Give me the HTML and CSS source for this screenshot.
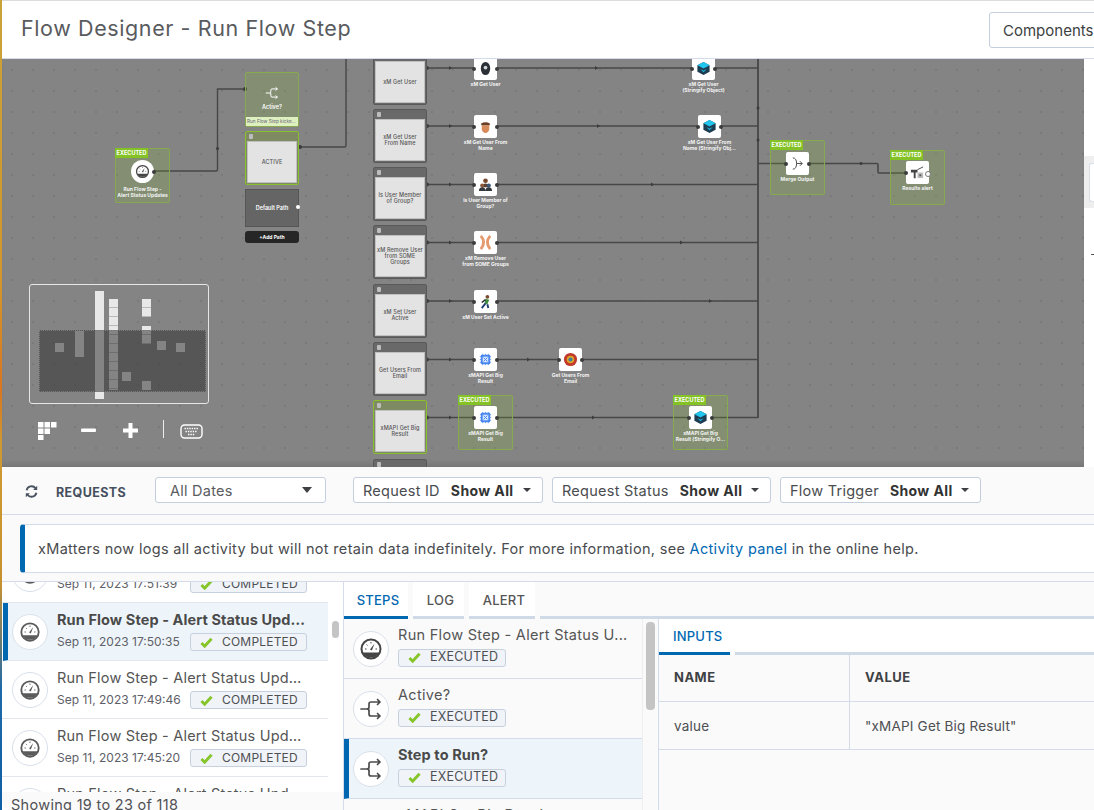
FILE: index.html
```html
<!DOCTYPE html>
<html lang="en">
<head>
  <meta charset="UTF-8" />
  <title>Flow Designer - Run Flow Step</title>
  <link rel="stylesheet" href="styles.css">
</head>
<body>
  <svg class="icon-defs" width="0" height="0">
    <symbol id="gauge" viewBox="0 0 24 24">
      <circle cx="12" cy="12" r="9.5" fill="none" stroke="currentColor" stroke-width="2"/>
      <path d="M3.600 15.500h16.800A9.500 9.500 0 0 1 3.600 15.500z" fill="currentColor"/>
      <path d="M11 12.500l4.500-6 -2.600 7z" fill="currentColor"/>
      <path d="M6 12h1.500M12 5v1.500M7.500 7.500l1 1M18 12h-1.500" stroke="currentColor" stroke-width="1"/>
    </symbol>
    <symbol id="split" viewBox="0 0 24 24">
      <path d="M2 12h6q2 0 2-2V7q0-2 2-2h9M18.500 2.500L21 5l-2.500 2.500M10 14v3q0 2 2 2h9M18.500 16.500L21 19l-2.500 2.500" fill="none" stroke="currentColor" stroke-width="1.700" stroke-linecap="round" stroke-linejoin="round"/>
      <path d="M8 12q2 0 2 2" fill="none" stroke="currentColor" stroke-width="1.700"/>
    </symbol>
    <symbol id="check" viewBox="0 0 14 12">
      <path d="M1.500 6.500L5 10l7.500-8" fill="none" stroke="#86c52a" stroke-width="3.200"/>
    </symbol>
    <symbol id="hex" viewBox="0 0 16 16">
      <path d="M8 1l6.500 3.500v7L8 15 1.500 11.500v-7z" fill="#1d3c52"/>
      <path d="M8 1l6.500 3.500L8 8 1.500 4.500z" fill="#21c6ee"/>
      <path d="M4.500 8.500L8 10.500l3.500-2L8 12z" fill="#21c6ee"/>
    </symbol>
    <symbol id="chip" viewBox="0 0 16 16">
      <rect x="3" y="3" width="10" height="10" rx="1" fill="#4a86ee"/>
      <path d="M2 5h12M2 8h12M2 11h12M5 2v12M8 2v12M11 2v12" stroke="#4a86ee" stroke-width=".8"/>
      <rect x="5" y="5" width="6" height="6" fill="#d5e6ff"/>
      <path d="M6 6l4 4M10 6l-4 4" stroke="#4a86ee" stroke-width="1"/>
    </symbol>
  </svg>

  <div class="app">
    <header class="top-bar">
      <h1>Flow Designer - Run Flow Step</h1>
      <button class="components-btn">Components</button>
    </header>

    <section class="designer">
      <div class="canvas">
        <div class="stage">
          <svg class="wires" width="1094" height="470" viewBox="0 0 1094 470">
            <g fill="none" stroke="#474747" stroke-width="1.400">
              <path d="M153 171H216Q217.500 171 217.500 169.500V89H245"/>
              <path d="M346 59V145.500Q346 147 344.500 147H300"/>
              <path d="M427 68H758M427 126H758M427 184.500H758M427 242.500H758M427 301H758M427 359.500H758M427 417.500H758"/>
              <path d="M758 59V418" stroke-width="1.800"/>
              <path d="M758 163.500H786M809 163.500H877Q878 163.500 878 165V172Q878 173 879 173H906" stroke-width="1.600"/>
            </g>
            <g fill="#3c3c3c">
              <circle cx="153" cy="171" r="2"/><circle cx="245" cy="89" r="2"/><circle cx="300" cy="147" r="2"/><circle cx="217.500" cy="148.500" r="1.500"/>
              <circle cx="427" cy="68" r="2"/><circle cx="427" cy="126" r="2"/><circle cx="427" cy="184.500" r="2"/><circle cx="427" cy="242.500" r="2"/><circle cx="427" cy="301" r="2"/><circle cx="427" cy="359.500" r="2"/><circle cx="427" cy="417.500" r="2"/>
              <path d="M449 66l3 2-3 2zM595 66l3 2-3 2zM449 124l3 2-3 2zM597 124l3 2-3 2zM449 182.500l3 2-3 2zM651 182.500l3 2-3 2zM449 240.500l3 2-3 2zM680 240.500l3 2-3 2zM449 299l3 2-3 2zM709 299l3 2-3 2zM449 357.500l3 2-3 2zM527 357.500l3 2-3 2zM449 415.500l3 2-3 2zM592 415.500l3 2-3 2z"/>
              <circle cx="758" cy="108" r="1.500"/><circle cx="758" cy="140" r="1.500"/><circle cx="861" cy="163.500" r="1.500"/>
            </g>
          </svg>

          <div class="group group-trigger"><span class="tag">EXECUTED</span></div>
          <div class="group group-big"><span class="tag">EXECUTED</span></div>
          <div class="group group-big-str"><span class="tag">EXECUTED</span></div>
          <div class="group group-merge"><span class="tag">EXECUTED</span></div>
          <div class="group group-results"><span class="tag">EXECUTED</span></div>

          <div class="node at-trigger">
            <div class="step round"><svg class="ico dark"><use href="#gauge"/></svg></div>
            <div class="step-label">Run Flow Step -<br>Alert Status Updates</div>
          </div>

          <div class="switch-col">
            <div class="switch-head">
              <svg class="switch-ico"><use href="#split"/></svg>
              <div class="switch-name">Active?</div>
              <div class="switch-note">Run Flow Step kicke...</div>
            </div>
            <div class="lane picked"><div class="lane-top"></div><div class="lane-body">ACTIVE</div></div>
            <div class="default-path">Default Path</div>
            <div class="add-path">+Add Path</div>
          </div>

          <div class="lane-col">
            <div class="lane"><div class="lane-top"></div><div class="lane-body">xM Get User</div></div>
            <div class="lane"><div class="lane-top"></div><div class="lane-body">xM Get User<br>From Name</div></div>
            <div class="lane"><div class="lane-top"></div><div class="lane-body">Is User Member<br>of Group?</div></div>
            <div class="lane"><div class="lane-top"></div><div class="lane-body">xM Remove User<br>from SOME<br>Groups</div></div>
            <div class="lane"><div class="lane-top"></div><div class="lane-body">xM Set User<br>Active</div></div>
            <div class="lane"><div class="lane-top"></div><div class="lane-body">Get Users From<br>Email</div></div>
            <div class="lane picked"><div class="lane-top"></div><div class="lane-body">xMAPI Get Big<br>Result</div></div>
            <div class="lane"><div class="lane-top"></div><div class="lane-body"></div></div>
          </div>

          <div class="node at-user">
            <div class="step"><svg class="ico" viewBox="0 0 16 16"><ellipse cx="8" cy="8" rx="5" ry="7" fill="#2b2f36"/><circle cx="8" cy="7" r="2" fill="#cfd3d8"/></svg></div>
            <div class="step-label">xM Get User</div>
          </div>
          <div class="node at-user-str">
            <div class="step"><svg class="ico"><use href="#hex"/></svg></div>
            <div class="step-label">xM Get User<br>(Stringify Object)</div>
          </div>
          <div class="node at-name">
            <div class="step"><svg class="ico" viewBox="0 0 16 16"><path d="M3 5q5-3 10 0l-1 2H4z" fill="#6b3d25"/><path d="M4 7h8v4q-1 4-4 4t-4-4z" fill="#d88a5a"/></svg></div>
            <div class="step-label">xM Get User From<br>Name</div>
          </div>
          <div class="node at-name-str">
            <div class="step"><svg class="ico"><use href="#hex"/></svg></div>
            <div class="step-label">xM Get User From<br>Name (Stringify Obj...</div>
          </div>
          <div class="node at-member">
            <div class="step"><svg class="ico" viewBox="0 0 16 16"><circle cx="8" cy="4" r="2.500" fill="#7a4a2c"/><path d="M4 9q4-4 8 0v2H4z" fill="#5c4030"/><circle cx="4.500" cy="9" r="2.200" fill="#8a5a3a"/><circle cx="11.500" cy="9" r="2.200" fill="#3b5a78"/><path d="M1 15q0-4 3.500-4T8 15zM8 15q0-4 3.500-4t3.500 4z" fill="#33383f"/></svg></div>
            <div class="step-label">Is User Member of<br>Group?</div>
          </div>
          <div class="node at-remove">
            <div class="step"><svg class="ico" viewBox="0 0 16 16"><path d="M3 1q6 7 0 14M13 1q-6 7 0 14" fill="none" stroke="#e59a6d" stroke-width="3"/></svg></div>
            <div class="step-label">xM Remove User<br>from SOME Groups</div>
          </div>
          <div class="node at-active">
            <div class="step"><svg class="ico" viewBox="0 0 16 16"><circle cx="10" cy="3" r="2" fill="#7a4a2c"/><path d="M8 5l4 1-2 5-3-1z" fill="#3f8f3f"/><path d="M8 10l-4 5M10 11l1 4" stroke="#1d3c72" stroke-width="2"/><path d="M8 6L4 9" stroke="#24292f" stroke-width="1.500"/></svg></div>
            <div class="step-label">xM User Set Active</div>
          </div>
          <div class="node at-big-a">
            <div class="step"><svg class="ico"><use href="#chip"/></svg></div>
            <div class="step-label">xMAPI Get Big<br>Result</div>
          </div>
          <div class="node at-email">
            <div class="step"><svg class="ico" viewBox="0 0 16 16"><circle cx="8" cy="8" r="7" fill="#c0392b"/><circle cx="8" cy="8" r="4" fill="#e0a526"/><circle cx="8" cy="8" r="2.200" fill="#3f7f9f"/></svg></div>
            <div class="step-label">Get Users From<br>Email</div>
          </div>
          <div class="node at-big-b">
            <div class="step"><svg class="ico"><use href="#chip"/></svg></div>
            <div class="step-label">xMAPI Get Big<br>Result</div>
          </div>
          <div class="node at-big-str">
            <div class="step"><svg class="ico"><use href="#hex"/></svg></div>
            <div class="step-label">xMAPI Get Big<br>Result (Stringify O...</div>
          </div>
          <div class="node at-merge">
            <div class="step"><svg class="ico" viewBox="0 0 16 16"><path d="M3 2q4 0 4 6T3 14M7 8h6M10.500 5.500L13 8l-2.500 2.500" fill="none" stroke="#444" stroke-width="1"/></svg></div>
            <div class="step-label">Merge Output</div>
          </div>
          <div class="node at-results">
            <div class="step open-end"><svg class="ico" viewBox="0 0 16 16"><path d="M1 5h7v3H6v6H4V8H1z" fill="#444"/><path d="M8 5l6-3" stroke="#444" stroke-width="1"/><rect x="8" y="8" width="6" height="6" fill="#bbb"/><rect x="10" y="10" width="2" height="2" fill="#555"/></svg></div>
            <div class="step-label">Results alert</div>
          </div>

          <div class="minimap">
            <div class="mini-view"></div>
            <i class="m m1"></i><i class="m m2"></i><i class="m m3"></i><i class="m m4"></i><i class="m m5"></i>
            <i class="m m6"></i><i class="m m7"></i><i class="m m8"></i><i class="m m9"></i><i class="m m10"></i>
          </div>

          <div class="canvas-tools">
            <svg class="tool-fit" width="19" height="18" viewBox="0 0 19 18" fill="#fff"><path d="M0 0h5.500v5.500H0zM6.500 0H12v5.500H6.500zM13 0h5.500v5.500H13zM0 6.500h5.500V12H0zM6.500 6.500H12V12H6.500zM0 13h5.500v5H0z"/></svg>
            <svg class="tool-minus" width="15" height="5" viewBox="0 0 15 5"><rect y="0.500" width="15" height="3.500" rx="1" fill="#fff"/></svg>
            <svg class="tool-plus" width="15" height="15" viewBox="0 0 15 15"><path d="M5.500 0h4v5.500H15v4H9.500V15h-4V9.500H0v-4h5.500z" fill="#fff"/></svg>
            <span class="tool-sep"></span>
            <svg class="tool-keys" width="23" height="15" viewBox="0 0 23 15"><rect x="1" y="1" width="21" height="13" rx="3.500" fill="none" stroke="#fff" stroke-width="1.400"/><path d="M4.500 4.500h14M5.500 7.500h12M8 10.500h7" stroke="#fff" stroke-width="1.300" stroke-dasharray="1.400 1"/></svg>
          </div>
        </div>
      </div>
      <aside class="side-peek">
        <div class="peek-band"><div class="peek-card"></div></div>
        <div class="peek-dash"></div>
      </aside>
    </section>

    <div class="toolbar">
      <svg class="refresh" width="13" height="13" viewBox="0 0 16 16"><path d="M2 6.500A6.200 6.200 0 0 1 13 4M14 9.500A6.200 6.200 0 0 1 3 12" fill="none" stroke="#4a5361" stroke-width="2.400"/><path d="M15 1v5h-5zM1 15v-5h5z" fill="#4a5361"/></svg>
      <span class="req-title">REQUESTS</span>
      <div class="select dates">All Dates<i class="caret big"></i></div>
      <div class="select filter f-id">Request ID <b>Show All</b><i class="caret"></i></div>
      <div class="select filter f-status">Request Status <b>Show All</b><i class="caret"></i></div>
      <div class="select filter f-trigger">Flow Trigger <b>Show All</b><i class="caret"></i></div>
    </div>

    <div class="notice-wrap">
      <div class="notice"><span>xMatters now logs all activity but will not retain data indefinitely. For more information, see <a href="#">Activity panel</a> in the online help.</span></div>
    </div>

    <div class="panels">
      <div class="req-panel">
        <div class="req-scroll">
          <ul class="req-list">
            <li class="req-row">
              <span class="circle"><svg class="gauge-ico"><use href="#gauge"/></svg></span>
              <div class="req-text">
                <div class="req-name">Run Flow Step - Alert Status Updates</div>
                <div class="req-meta"><span class="req-date">Sep 11, 2023 17:51:39</span><span class="badge wide"><svg class="tick"><use href="#check"/></svg>COMPLETED</span></div>
              </div>
            </li>
            <li class="req-row selected">
              <span class="circle"><svg class="gauge-ico"><use href="#gauge"/></svg></span>
              <div class="req-text">
                <div class="req-name">Run Flow Step - Alert Status Updates</div>
                <div class="req-meta"><span class="req-date">Sep 11, 2023 17:50:35</span><span class="badge wide"><svg class="tick"><use href="#check"/></svg>COMPLETED</span></div>
              </div>
            </li>
            <li class="req-row">
              <span class="circle"><svg class="gauge-ico"><use href="#gauge"/></svg></span>
              <div class="req-text">
                <div class="req-name">Run Flow Step - Alert Status Updates</div>
                <div class="req-meta"><span class="req-date">Sep 11, 2023 17:49:46</span><span class="badge wide"><svg class="tick"><use href="#check"/></svg>COMPLETED</span></div>
              </div>
            </li>
            <li class="req-row">
              <span class="circle"><svg class="gauge-ico"><use href="#gauge"/></svg></span>
              <div class="req-text">
                <div class="req-name">Run Flow Step - Alert Status Updates</div>
                <div class="req-meta"><span class="req-date">Sep 11, 2023 17:45:20</span><span class="badge wide"><svg class="tick"><use href="#check"/></svg>COMPLETED</span></div>
              </div>
            </li>
            <li class="req-row">
              <span class="circle"><svg class="gauge-ico"><use href="#gauge"/></svg></span>
              <div class="req-text">
                <div class="req-name">Run Flow Step - Alert Status Updates</div>
              </div>
            </li>
          </ul>
          <div class="scroll-track"><span class="thumb req-thumb"></span></div>
        </div>
        <div class="req-foot">Showing 19 to 23 of 118</div>
      </div>

      <div class="detail">
        <nav class="tabs">
          <a class="tab active t-steps">STEPS</a>
          <a class="tab t-log">LOG</a>
          <a class="tab t-alert">ALERT</a>
          <span class="tab-rest"></span>
        </nav>
        <div class="detail-body">
          <div class="steps-col">
            <ul class="step-list">
              <li class="step-row">
                <span class="circle"><svg class="gauge-ico strong"><use href="#gauge"/></svg></span>
                <div class="step-text"><div class="step-name">Run Flow Step - Alert Status U...</div><span class="badge"><svg class="tick"><use href="#check"/></svg>EXECUTED</span></div>
              </li>
              <li class="step-row">
                <span class="circle"><svg class="split-ico"><use href="#split"/></svg></span>
                <div class="step-text"><div class="step-name">Active?</div><span class="badge"><svg class="tick"><use href="#check"/></svg>EXECUTED</span></div>
              </li>
              <li class="step-row selected">
                <span class="circle"><svg class="split-ico"><use href="#split"/></svg></span>
                <div class="step-text"><div class="step-name">Step to Run?</div><span class="badge"><svg class="tick"><use href="#check"/></svg>EXECUTED</span></div>
              </li>
              <li class="step-row">
                <span class="circle"></span>
                <div class="step-text"><div class="step-name">xMAPI Get Big Result</div></div>
              </li>
            </ul>
            <div class="scroll-track steps-track"><span class="thumb step-thumb"></span></div>
          </div>
          <div class="inputs">
            <div class="inputs-tabs"><a class="inputs-tab">INPUTS</a><span class="inputs-rest"></span></div>
            <div class="kv head"><div class="k">NAME</div><div class="v">VALUE</div></div>
            <div class="kv"><div class="k">value</div><div class="v">"xMAPI Get Big Result"</div></div>
          </div>
        </div>
      </div>
    </div>
  </div>
</body>
</html>
```

FILE: styles.css
```css
:root {
  --blue: #0067b1;
  --line: #d3dce8;
  --text: #3f4144;
  --soft: #fafafa;
  --picked: #eef5fa;
  --lime: #84c225;
}

* {
  box-sizing: border-box;
}

html, body {
  margin: 0;
  height: 810px;
  overflow: hidden;
}

body {
  font-family: Inter, 'Noto Sans', sans-serif;
  color: var(--text);
  background: linear-gradient(#c9a33a 0, #d3962c 35%, #d9761f 48%, #cf9a32 55%, #c8912f 72%, #1f69a8 85%, #0f5fa5 100%);
}

ul {
  list-style: none;
  margin: 0;
  padding: 0;
}

.icon-defs {
  position: absolute;
}

.app {
  margin-left: 2px;
  height: 810px;
  overflow: hidden;
  display: flex;
  flex-direction: column;
  background: var(--soft);
}

/* header */
.top-bar {
  height: 59px;
  flex: none;
  display: flex;
  align-items: center;
  justify-content: space-between;
  padding: 0 0 0 19px;
  background: #fff;
  border-top: 1px solid #dcdcdc;
  border-bottom: 1px solid var(--line);
  overflow: hidden;
}

.top-bar h1 {
  margin: 0 0 3px;
  font-size: 21.5px;
  font-weight: 400;
  color: #595b5e;
  letter-spacing: 0.6px;
}

.components-btn {
  width: 125px;
  height: 36px;
  margin-right: -20px;
  padding: 1px 0 0 13px;
  text-align: left;
  font: 15px Inter, sans-serif;
  color: #3d3f42;
  background: #fff;
  border: 1px solid #c3cede;
  border-radius: 3px;
}

/* designer canvas */
.designer {
  height: 408px;
  flex: none;
  display: flex;
}

.canvas {
  position: relative;
  width: 1082px;
  overflow: hidden;
  background: #848484;
  box-shadow: inset 0 -6px 6px -4px rgba(0, 0, 0, 0.15);
}

.stage {
  position: absolute;
  left: -2px;
  top: -59px;
  width: 1084px;
  height: 526px;
  background-image: radial-gradient(circle, #5a5a5a 0.5px, transparent 0.9px);
  background-size: 21px 21px;
  background-position: 1.500px -3.500px;
}

.wires {
  position: absolute;
  left: 0;
  top: 0;
}

.group {
  position: absolute;
  width: 55px;
  height: 55px;
  background: rgba(132, 194, 37, 0.17);
  border: 1px solid #88aa4e;
  border-radius: 2px;
}

.tag {
  display: block;
  width: 33px;
  height: 10px;
  margin: -1px 0 0 -1px;
  font-size: 5.500px;
  font-weight: 700;
  line-height: 10px;
  text-align: center;
  color: #fff;
  background: var(--lime);
}

.group-trigger { left: 115px; top: 148px; }
.group-big { left: 458px; top: 395px; }
.group-big-str { left: 673px; top: 395px; }
.group-merge { left: 770px; top: 140px; }
.group-results { left: 890px; top: 150px; }

.node {
  position: absolute;
  width: 55px;
  display: flex;
  flex-direction: column;
  align-items: center;
}

.step {
  position: relative;
  width: 23px;
  height: 23px;
  flex: none;
  display: flex;
  align-items: center;
  justify-content: center;
  background: #fff;
  border-radius: 2px;
}

.step::before,
.step::after {
  content: "";
  position: absolute;
  top: 9.500px;
  width: 4px;
  height: 4px;
  border-radius: 50%;
  background: #3c3c3c;
}

.step::before { left: -2px; }
.step::after { right: -2px; }
.step.round { border-radius: 50%; }
.step.round::before { display: none; }
.step.open-end::after { background: #fff; border: 1px solid #777; }

.ico {
  width: 15px;
  height: 15px;
}

.ico.dark {
  color: #444;
}

.step-label {
  margin-top: 1px;
  font-size: 5px;
  font-weight: 700;
  line-height: 6px;
  text-align: center;
  white-space: nowrap;
  color: #f4f4f4;
}

.at-trigger { left: 115px; top: 160px; }
.at-trigger .step-label { margin-top: 3px; }
.at-user { left: 458px; top: 57px; }
.at-user-str { left: 676px; top: 57px; }
.at-name { left: 458px; top: 115px; }
.at-name-str { left: 682px; top: 115px; }
.at-member { left: 458px; top: 173px; }
.at-remove { left: 458px; top: 231px; }
.at-active { left: 458px; top: 290px; }
.at-big-a { left: 458px; top: 348px; }
.at-email { left: 543px; top: 348px; }
.at-big-b { left: 458px; top: 406px; }
.at-big-str { left: 673px; top: 406px; }
.at-merge { left: 770px; top: 152px; }
.at-results { left: 890px; top: 161px; }

.switch-col {
  position: absolute;
  left: 245px;
  top: 72px;
  width: 54px;
  display: flex;
  flex-direction: column;
  gap: 4px;
}

.switch-head {
  height: 55px;
  display: flex;
  flex-direction: column;
  align-items: center;
  padding-top: 13px;
  color: #fff;
  background: rgba(132, 194, 37, 0.17);
  border: 1px solid #88aa4e;
  border-radius: 2px;
}

.switch-ico {
  width: 14px;
  height: 14px;
}

.switch-name {
  margin-top: 4px;
  font-size: 5.500px;
  font-weight: 600;
}

.switch-note {
  width: 100%;
  height: 9px;
  margin-top: auto;
  padding-left: 1px;
  font-size: 4.700px;
  line-height: 9px;
  white-space: nowrap;
  overflow: hidden;
  color: #667;
  background: #dff0c0;
}

.default-path {
  height: 38px;
  display: flex;
  align-items: center;
  justify-content: center;
  position: relative;
  font-size: 5.500px;
  font-weight: 600;
  color: #fff;
  background: #656565;
  border: 1px solid #555;
}

.default-path::after {
  content: "";
  position: absolute;
  right: -2px;
  top: 15px;
  width: 4px;
  height: 4px;
  border-radius: 50%;
  background: #fff;
}

.add-path {
  height: 12px;
  font-size: 5px;
  font-weight: 700;
  line-height: 12px;
  text-align: center;
  color: #fff;
  background: #262626;
  border-radius: 3px;
}

.lane-col {
  position: absolute;
  left: 373px;
  top: 50.500px;
  width: 54px;
  display: flex;
  flex-direction: column;
  gap: 4.300px;
}

.lane {
  height: 54px;
  flex: none;
  display: flex;
  flex-direction: column;
  background: #696969;
  border: 1px solid #595959;
  border-radius: 2px;
}

.lane.picked {
  background: #7d8a62;
  border-color: #8abf2e;
}

.lane-top {
  height: 9px;
  flex: none;
  position: relative;
}

.lane-top::before {
  content: "";
  position: absolute;
  left: 3px;
  top: 2px;
  width: 4px;
  height: 5px;
  background: #bdbdbd;
  border-radius: 1px;
}

.lane-body {
  flex: 1;
  margin: 0 1px 1px;
  display: flex;
  align-items: center;
  justify-content: center;
  font-size: 5.500px;
  font-weight: 500;
  letter-spacing: 0.1px;
  line-height: 6px;
  text-align: center;
  color: #555;
  background: #e3e3e3;
  border: 1px solid #c0c0c0;
}

/* minimap */
.minimap {
  position: absolute;
  left: 29px;
  top: 284px;
  width: 180px;
  height: 120px;
  border: 1px solid #e6e6e6;
  border-radius: 3px;
}

.mini-view {
  position: absolute;
  left: 9px;
  top: 45px;
  width: 167px;
  height: 62px;
  background: rgba(50, 50, 50, 0.55);
  border: 1px dotted #7b7b7b;
  z-index: 1;
}

.m {
  position: absolute;
  background: #e8e8e8;
}

.m1 { left: 65px; top: 6px; width: 9px; height: 108px; }
.m2 { left: 79px; top: 14px; width: 9px; height: 91px; background: repeating-linear-gradient(#e8e8e8 0 8px, #b9b9b9 8px 9px); }
.m3 { left: 112px; top: 14px; width: 9px; height: 18px; background: repeating-linear-gradient(#e8e8e8 0 8px, #b9b9b9 8px 9px); }
.m4 { left: 112px; top: 41px; width: 9px; height: 18px; background: repeating-linear-gradient(#e8e8e8 0 8px, #b9b9b9 8px 9px); }
.m5 { left: 25px; top: 58px; width: 9px; height: 9px; }
.m6 { left: 45px; top: 46px; width: 9px; height: 26px; }
.m7 { left: 92px; top: 87px; width: 9px; height: 9px; }
.m8 { left: 127px; top: 56px; width: 9px; height: 9px; }
.m9 { left: 146px; top: 58px; width: 9px; height: 9px; }
.m10 { left: 112px; top: 96px; width: 9px; height: 9px; }

.canvas-tools svg,
.tool-sep {
  position: absolute;
}

.tool-fit { left: 38px; top: 422px; }
.tool-minus { left: 81px; top: 428px; }
.tool-plus { left: 123px; top: 423px; }
.tool-sep { left: 163px; top: 420px; width: 1px; height: 18px; background: #eee; }
.tool-keys { left: 180px; top: 424px; }

.side-peek {
  flex: 1;
  background: #fff;
  padding-top: 97px;
}

.peek-band {
  height: 52px;
  padding: 7px 0 6px 5px;
  background: #eee;
}

.peek-card {
  height: 39px;
  background: #fff;
  border: 1px solid #d9dfe8;
  border-right: 0;
  border-radius: 3px 0 0 3px;
}

.peek-dash {
  width: 3px;
  height: 1px;
  margin: 46px 0 0 7px;
  background: #555;
}

/* toolbar */
.toolbar {
  height: 48px;
  flex: none;
  display: flex;
  align-items: center;
  padding: 0 0 1px 23px;
  background: var(--soft);
  border-bottom: 1px solid var(--line);
}

.refresh {
  margin-top: 2px;
}

.req-title {
  width: 99px;
  margin: 4px 0 0 18px;
  font-size: 12.500px;
  font-weight: 700;
  letter-spacing: 0.4px;
  color: #46505e;
}

.select {
  height: 26px;
  display: flex;
  align-items: center;
  font-size: 14.500px;
  letter-spacing: 0.25px;
  color: #4a4c4f;
  background: #fff;
  border: 1px solid #c3cede;
  border-radius: 3px;
  white-space: nowrap;
}

.select b {
  margin-left: 11px;
  font-size: 14px;
  font-weight: 700;
  letter-spacing: 0.4px;
  color: #333;
}

.dates {
  width: 171px;
  padding: 0 13px 0 14px;
  justify-content: space-between;
  color: #5a5c60;
}

.filter {
  padding: 0 11px 0 9px;
}

.filter .caret {
  margin-left: auto;
}

.f-id { width: 190px; margin-left: 27px; }
.f-status { width: 219px; margin-left: 9px; }
.f-trigger { width: 201px; margin-left: 9px; }

.caret {
  width: 0;
  height: 0;
  margin-left: 8px;
  border-left: 4px solid transparent;
  border-right: 4px solid transparent;
  border-top: 4.500px solid #3d3f42;
}

.caret.big {
  border-left-width: 5px;
  border-right-width: 5px;
  border-top-width: 6px;
}

/* notice */
.notice-wrap {
  height: 67px;
  flex: none;
  padding: 9px 0 0 18px;
  border-bottom: 1px solid var(--line);
}

.notice {
  width: 1100px;
  height: 49px;
  padding-left: 13px;
  display: flex;
  align-items: center;
  font-size: 14.500px;
  letter-spacing: 0.32px;
  white-space: nowrap;
  color: #494b4e;
  background: #fff;
  border: 1px solid var(--line);
  border-left: 5px solid var(--blue);
  border-radius: 4px 0 0 4px;
}

.notice a {
  color: var(--blue);
  text-decoration: none;
}

/* requests + detail */
.panels {
  flex: 1;
  min-height: 0;
  overflow: hidden;
  display: flex;
}

.req-panel {
  width: 342px;
  flex: none;
  display: flex;
  flex-direction: column;
  overflow: hidden;
  background: #fff;
  border-right: 1px solid var(--line);
}

.req-scroll {
  display: flex;
  flex: 1;
  min-height: 0;
  overflow: hidden;
}

.req-list {
  width: 326px;
  flex: none;
  margin-top: -37px;
}

.req-row {
  height: 58px;
  display: flex;
  gap: 9px;
  padding: 11px 0 0 10px;
  border-bottom: 1px solid #e3e6ea;
  border-left: 0 solid var(--blue);
}

.req-row.selected {
  margin-left: 1px;
  padding-left: 4px;
  border-left-width: 5px;
  background: var(--picked);
}

.circle {
  width: 36px;
  height: 36px;
  flex: none;
  display: flex;
  align-items: center;
  justify-content: center;
  background: #fff;
  border: 1px solid #d9e0ea;
  border-radius: 50%;
}

.gauge-ico {
  width: 22px;
  height: 22px;
  color: #5a5a5a;
}

.gauge-ico.strong {
  width: 24px;
  height: 24px;
  color: #444;
}

.split-ico {
  width: 24px;
  height: 24px;
  color: #4c4c4c;
}

.req-text {
  min-width: 0;
  flex: 1;
  margin-top: -3px;
}

.req-name {
  width: 247px;
  font-size: 14.500px;
  letter-spacing: 0.2px;
  line-height: 18px;
  color: #555;
  white-space: nowrap;
  overflow: hidden;
  text-overflow: ellipsis;
}

.selected .req-name {
  width: 252px;
  font-weight: 700;
  letter-spacing: 0.1px;
  color: #4a4a4a;
}

.req-meta {
  display: flex;
  align-items: center;
  margin-top: 4px;
}

.req-date {
  width: 133px;
  padding-bottom: 2px;
  font-size: 12px;
  color: #5e6067;
}

.badge {
  display: inline-flex;
  align-items: center;
  width: 108px;
  height: 18px;
  padding-left: 9px;
  font-size: 12.500px;
  letter-spacing: 0.2px;
  line-height: 1;
  color: #4d4f52;
  background: #f0f3f8;
  border: 1px solid #c6d0de;
  border-radius: 3px;
}

.badge.wide {
  width: 117px;
  font-size: 12px;
}

.tick {
  width: 13px;
  height: 11px;
  margin-right: 9px;
}

.scroll-track {
  position: relative;
  flex: 1;
}

.thumb {
  position: absolute;
  display: block;
  background: #c4c4c4;
  border-radius: 4px;
}

.req-thumb {
  left: 4px;
  top: 39px;
  width: 7px;
  height: 17px;
}

.req-foot {
  height: 18px;
  flex: none;
  padding-left: 9px;
  font-size: 14.500px;
  letter-spacing: 0.3px;
  line-height: 26px;
  overflow: hidden;
  color: #4f5155;
  background: #fafafa;
  border-radius: 0 0 0 8px;
}

.detail {
  flex: 1;
  min-width: 0;
  display: flex;
  flex-direction: column;
}

.tabs {
  height: 37px;
  flex: none;
  display: flex;
  align-items: stretch;
  gap: 5px;
}

.tab {
  display: flex;
  align-items: center;
  justify-content: center;
  font-size: 13px;
  font-weight: 500;
  letter-spacing: 0.2px;
  padding: 2px 0 0 4px;
  color: #555;
  background: #fff;
  border-bottom: 3px solid #d0d9e6;
}

.tab.active {
  color: var(--blue);
  border-bottom-color: var(--blue);
}

.t-steps { width: 64px; }
.t-log { width: 51px; }
.t-alert { width: 66px; }

.tab-rest {
  flex: 1;
  border-bottom: 3px solid #d0d9e6;
}

.detail-body {
  flex: 1;
  min-height: 0;
  overflow: hidden;
  display: flex;
}

.steps-col {
  width: 315px;
  flex: none;
  display: flex;
  border-right: 1px solid var(--line);
}

.step-list {
  width: 299px;
  flex: none;
  border-right: 1px solid #eee;
}

.step-row {
  height: 60px;
  display: flex;
  align-items: center;
  gap: 9px;
  padding-left: 9px;
  border-bottom: 1px solid var(--line);
  border-left: 0 solid var(--blue);
}

.step-row.selected {
  padding-left: 4px;
  border-left-width: 5px;
  background: var(--picked);
}

.step-text {
  align-self: flex-start;
  padding-top: 7px;
}

.step-name {
  font-size: 14.500px;
  letter-spacing: 0.3px;
  line-height: 18px;
  margin-bottom: 3px;
  white-space: nowrap;
  color: #555;
}

.selected .step-name {
  font-weight: 700;
  letter-spacing: 0.1px;
  color: #4a4a4a;
}

.steps-track {
  flex: 1;
}

.step-thumb {
  left: 3px;
  top: 3px;
  width: 9px;
  height: 88px;
}

.inputs {
  flex: 1;
  min-width: 0;
}

.inputs-tabs {
  height: 36px;
  display: flex;
  gap: 5px;
  background: #fff;
}

.inputs-tab {
  width: 71px;
  padding: 9px 0 0 14px;
  font-size: 13px;
  font-weight: 500;
  letter-spacing: 0.2px;
  color: var(--blue);
  border-bottom: 3px solid var(--blue);
}

.inputs-rest {
  flex: 1;
  border-bottom: 3px solid #d0d9e6;
}

.kv {
  display: flex;
  height: 48px;
  border-bottom: 1px solid var(--line);
  font-size: 13.500px;
  letter-spacing: 0.2px;
  color: #4d4f52;
}

.kv.head {
  height: 47px;
  font-size: 13px;
  font-weight: 700;
  letter-spacing: 0.5px;
  color: #3f4144;
}

.kv.head > div {
  padding-bottom: 3px;
}

.k {
  width: 191px;
  flex: none;
  display: flex;
  align-items: center;
  padding-left: 15px;
  border-right: 1px solid var(--line);
}

.v {
  flex: 1;
  display: flex;
  align-items: center;
  padding-left: 15px;
  white-space: nowrap;
}
```
